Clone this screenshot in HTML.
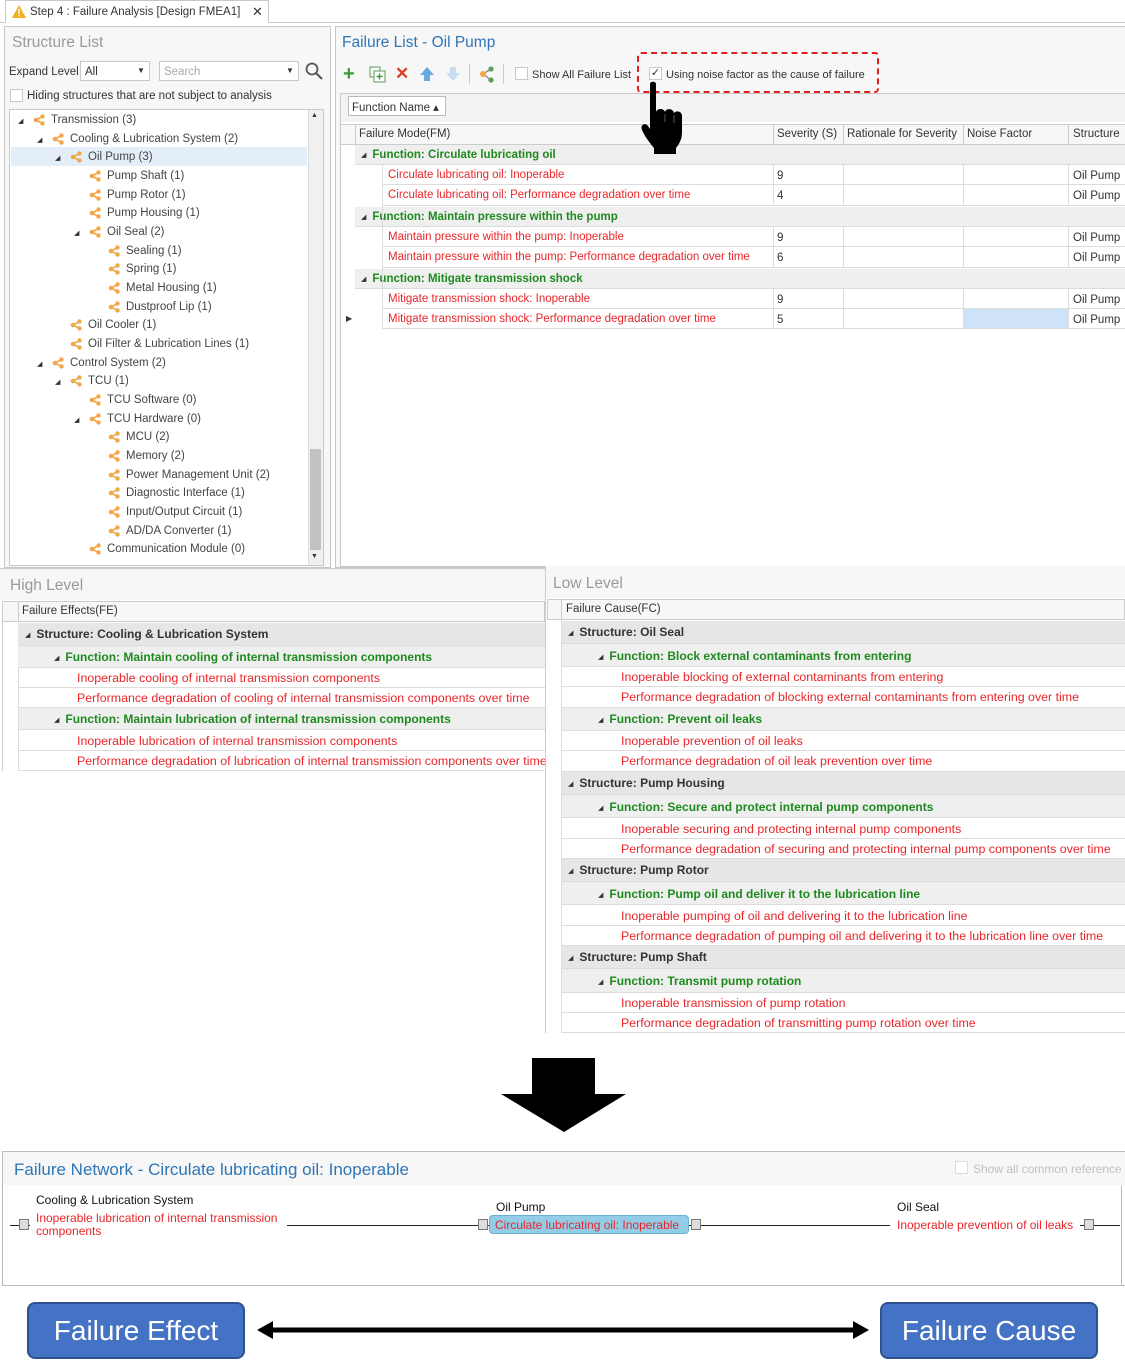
<!DOCTYPE html>
<html><head><meta charset="utf-8"><style>
*{margin:0;padding:0;box-sizing:border-box}
body{width:1125px;height:1371px;background:#fff;position:relative;overflow:hidden;font-family:"Liberation Sans",sans-serif;font-size:11.5px;color:#333}
.a{position:absolute;white-space:nowrap}
.b{position:absolute;border:1px solid #c8c8c8}
.ti{position:absolute;font-size:15.5px;color:#9a9a9a}
.tr{position:absolute;height:19px;line-height:21px;font-size:11.5px;color:#444;white-space:nowrap}
.tr svg{position:absolute;left:-18px;top:4px}
.tr i{position:absolute;left:-33px;top:1px;font-style:normal;font-size:7px;color:#333}
.row{position:absolute;white-space:nowrap;border-bottom:1px solid #dcdcdc}
.g{background:#efefef;color:#1e8a1e;font-weight:bold}
.s{background:#e6e6e6;color:#333;font-weight:bold}
.r{color:#e8262a;background:#fff}
.L{font-size:12.4px}
.L.g,.L.s{font-size:12px}
.tri{font-size:7px;color:#333;font-weight:normal;display:inline-block;margin-right:6px;vertical-align:1px}
</style></head><body>
<svg width="0" height="0" style="position:absolute"><defs><g id="sh"><line x1="3" y1="6" x2="9.5" y2="2.5" stroke="#f0a848" stroke-width="1.6"/><line x1="3" y1="6" x2="9.5" y2="9.5" stroke="#f0a848" stroke-width="1.6"/><circle cx="3" cy="6" r="2.3" fill="#f0a848"/><circle cx="9.5" cy="2.5" r="2.2" fill="#f0a848"/><circle cx="9.5" cy="9.5" r="2.2" fill="#f0a848"/></g></defs></svg>

<!-- tab -->
<div class="a" style="left:0;top:22px;width:1125px;border-top:1px solid #c8c8c8"></div>
<div class="a" style="left:5px;top:0;width:264px;height:23px;background:#fff;border:1px solid #c8c8c8;border-bottom:none"></div>
<svg class="a" style="left:12px;top:5px" width="14" height="13"><polygon points="7,0 14,13 0,13" fill="#f0b020"/><rect x="6.3" y="4" width="1.4" height="5" fill="#fff"/><rect x="6.3" y="10" width="1.4" height="1.5" fill="#fff"/></svg>
<div class="a" style="left:30px;top:6px;font-size:11.5px;color:#333">Step 4 : Failure Analysis [Design FMEA1]</div>
<div class="a" style="left:252px;top:4px;font-size:13px;color:#333">✕</div>

<!-- left panel -->
<div class="b" style="left:4px;top:26px;width:327px;height:542px;background:#f7f7f7"></div>
<div class="ti" style="left:12px;top:34px">Structure List</div>
<div class="a" style="left:9px;top:66px;font-size:11.5px">Expand Level</div>
<div class="b" style="left:80px;top:61px;width:70px;height:20px;background:#fff"></div>
<div class="a" style="left:85px;top:66px;font-size:11.5px">All</div>
<div class="a" style="left:137px;top:66px;font-size:8px">▼</div>
<div class="b" style="left:159px;top:61px;width:140px;height:20px;background:#fff"></div>
<div class="a" style="left:164px;top:66px;font-size:11.5px;color:#aaa">Search</div>
<div class="a" style="left:286px;top:66px;font-size:8px">▼</div>
<svg class="a" style="left:305px;top:62px" width="18" height="18"><circle cx="7" cy="7" r="5.5" fill="none" stroke="#555" stroke-width="1.8"/><line x1="11" y1="11" x2="17" y2="17" stroke="#555" stroke-width="2"/></svg>
<div class="b" style="left:10px;top:89px;width:13px;height:13px;background:#fff"></div>
<div class="a" style="left:27px;top:90px;font-size:11.5px">Hiding structures that are not subject to analysis</div>
<div class="b" style="left:9px;top:109px;width:315px;height:457px;background:#fff"></div>
<div class="a" style="left:11px;top:147px;width:296px;height:19px;background:#e3eef8"></div>
<div class="a" style="left:308px;top:110px;width:15px;height:455px;background:#f0f0f0;border-left:1px solid #ddd"></div>
<div class="a" style="left:310px;top:449px;width:11px;height:101px;background:#c2c2c2"></div>
<div class="a" style="left:311px;top:112px;font-size:7px">▲</div>
<div class="a" style="left:311px;top:553px;font-size:7px">▼</div>

<div class="tr" style="left:51px;top:110px"><i>◢</i><svg width="12" height="12"><use href="#sh"/></svg>Transmission (3)</div>
<div class="tr" style="left:70px;top:129px"><i>◢</i><svg width="12" height="12"><use href="#sh"/></svg>Cooling &amp; Lubrication System (2)</div>
<div class="tr" style="left:88px;top:147px"><i>◢</i><svg width="12" height="12"><use href="#sh"/></svg>Oil Pump (3)</div>
<div class="tr" style="left:107px;top:166px"><svg width="12" height="12"><use href="#sh"/></svg>Pump Shaft (1)</div>
<div class="tr" style="left:107px;top:185px"><svg width="12" height="12"><use href="#sh"/></svg>Pump Rotor (1)</div>
<div class="tr" style="left:107px;top:203px"><svg width="12" height="12"><use href="#sh"/></svg>Pump Housing (1)</div>
<div class="tr" style="left:107px;top:222px"><i>◢</i><svg width="12" height="12"><use href="#sh"/></svg>Oil Seal (2)</div>
<div class="tr" style="left:126px;top:241px"><svg width="12" height="12"><use href="#sh"/></svg>Sealing (1)</div>
<div class="tr" style="left:126px;top:259px"><svg width="12" height="12"><use href="#sh"/></svg>Spring (1)</div>
<div class="tr" style="left:126px;top:278px"><svg width="12" height="12"><use href="#sh"/></svg>Metal Housing (1)</div>
<div class="tr" style="left:126px;top:297px"><svg width="12" height="12"><use href="#sh"/></svg>Dustproof Lip (1)</div>
<div class="tr" style="left:88px;top:315px"><svg width="12" height="12"><use href="#sh"/></svg>Oil Cooler (1)</div>
<div class="tr" style="left:88px;top:334px"><svg width="12" height="12"><use href="#sh"/></svg>Oil Filter &amp; Lubrication Lines (1)</div>
<div class="tr" style="left:70px;top:353px"><i>◢</i><svg width="12" height="12"><use href="#sh"/></svg>Control System (2)</div>
<div class="tr" style="left:88px;top:371px"><i>◢</i><svg width="12" height="12"><use href="#sh"/></svg>TCU (1)</div>
<div class="tr" style="left:107px;top:390px"><svg width="12" height="12"><use href="#sh"/></svg>TCU Software (0)</div>
<div class="tr" style="left:107px;top:409px"><i>◢</i><svg width="12" height="12"><use href="#sh"/></svg>TCU Hardware (0)</div>
<div class="tr" style="left:126px;top:427px"><svg width="12" height="12"><use href="#sh"/></svg>MCU (2)</div>
<div class="tr" style="left:126px;top:446px"><svg width="12" height="12"><use href="#sh"/></svg>Memory (2)</div>
<div class="tr" style="left:126px;top:465px"><svg width="12" height="12"><use href="#sh"/></svg>Power Management Unit (2)</div>
<div class="tr" style="left:126px;top:483px"><svg width="12" height="12"><use href="#sh"/></svg>Diagnostic Interface (1)</div>
<div class="tr" style="left:126px;top:502px"><svg width="12" height="12"><use href="#sh"/></svg>Input/Output Circuit (1)</div>
<div class="tr" style="left:126px;top:521px"><svg width="12" height="12"><use href="#sh"/></svg>AD/DA Converter (1)</div>
<div class="tr" style="left:107px;top:539px"><svg width="12" height="12"><use href="#sh"/></svg>Communication Module (0)</div>

<!-- right panel -->
<div class="b" style="left:335px;top:26px;width:800px;height:542px;background:#f7f7f7"></div>
<div class="a" style="left:342px;top:34px;font-size:15.5px;color:#2e75b6">Failure List - Oil Pump</div>
<div class="a" style="left:343px;top:63px;font-size:20px;color:#3a9a3a;font-weight:bold">+</div>
<svg class="a" style="left:369px;top:66px" width="17" height="17"><rect x="1" y="1" width="10" height="10" fill="none" stroke="#5a9a5a"/><rect x="5" y="5" width="11" height="11" fill="#fff" stroke="#5a9a5a"/><path d="M10.5 7.5v6M7.5 10.5h6" stroke="#3a9a3a" stroke-width="1.4"/></svg>
<div class="a" style="left:395px;top:64px;font-size:17px;color:#d84020;font-weight:bold">✕</div>
<svg class="a" style="left:419px;top:66px" width="16" height="16"><path d="M8 1L15 9H11V15H5V9H1Z" fill="#6aa8e0"/></svg>
<svg class="a" style="left:445px;top:66px" width="16" height="16"><path d="M8 15L15 7H11V1H5V7H1Z" fill="#c8dcf2"/></svg>
<div class="a" style="left:469px;top:64px;width:1px;height:20px;background:#ccc"></div>
<svg class="a" style="left:479px;top:66px" width="16" height="17"><line x1="4" y1="8" x2="12" y2="3" stroke="#888" stroke-width="1.4"/><line x1="4" y1="8" x2="12" y2="14" stroke="#888" stroke-width="1.4"/><circle cx="4" cy="8" r="3" fill="#f0a848"/><circle cx="12" cy="3" r="2.6" fill="#5aa05a"/><circle cx="12" cy="14" r="2.6" fill="#5aa05a"/></svg>
<div class="a" style="left:503px;top:64px;width:1px;height:20px;background:#ccc"></div>
<div class="b" style="left:515px;top:67px;width:13px;height:13px;background:#fff"></div>
<div class="a" style="left:532px;top:69px;font-size:11px">Show All Failure List</div>
<div class="b" style="left:649px;top:67px;width:13px;height:13px;background:#fff;font-size:11px;line-height:11px;text-align:center;color:#333">✓</div>
<div class="a" style="left:666px;top:69px;font-size:11px">Using noise factor as the cause of failure</div>
<div class="a" style="left:637px;top:52px;width:242px;height:41px;border:2px dashed #e02020;border-radius:4px"></div>

<div class="b" style="left:340px;top:93px;width:790px;height:474px;background:#fff"></div>
<div class="a" style="left:341px;top:94px;width:789px;height:28px;background:#f3f3f3"></div>
<div class="b" style="left:348px;top:96px;width:98px;height:20px;background:#fff;border-color:#bbb"></div>
<div class="a" style="left:352px;top:100px">Function Name ▴</div>
<div class="a" style="left:341px;top:124px;width:789px;height:21px;background:#f7f7f7;border-top:1px solid #ccc;border-bottom:1px solid #ccc"></div>
<div class="a" style="left:355px;top:124px;width:1px;height:21px;background:#ccc"></div>
<div class="a" style="left:773px;top:124px;width:1px;height:21px;background:#ccc"></div>
<div class="a" style="left:843px;top:124px;width:1px;height:21px;background:#ccc"></div>
<div class="a" style="left:963px;top:124px;width:1px;height:21px;background:#ccc"></div>
<div class="a" style="left:1068px;top:124px;width:1px;height:21px;background:#ccc"></div>
<div class="a" style="left:359px;top:128px">Failure Mode(FM)</div>
<div class="a" style="left:777px;top:128px">Severity (S)</div>
<div class="a" style="left:847px;top:128px">Rationale for Severity</div>
<div class="a" style="left:967px;top:128px">Noise Factor</div>
<div class="a" style="left:1073px;top:128px">Structure</div>

<div class="row g" style="left:355px;top:145px;width:775px;height:20px;line-height:21px;padding-left:6px"><span class="tri">◢</span>Function: Circulate lubricating oil</div>
<div class="row g" style="left:355px;top:207px;width:775px;height:20px;line-height:21px;padding-left:6px"><span class="tri">◢</span>Function: Maintain pressure within the pump</div>
<div class="row g" style="left:355px;top:269px;width:775px;height:20px;line-height:21px;padding-left:6px"><span class="tri">◢</span>Function: Mitigate transmission shock</div>

<div class="row r" style="left:382px;top:165px;width:748px;height:20px;line-height:21px;padding-left:6px">Circulate lubricating oil: Inoperable</div>
<div class="row r" style="left:382px;top:185px;width:748px;height:21px;line-height:21px;padding-left:6px">Circulate lubricating oil: Performance degradation over time</div>
<div class="row r" style="left:382px;top:227px;width:748px;height:20px;line-height:21px;padding-left:6px">Maintain pressure within the pump: Inoperable</div>
<div class="row r" style="left:382px;top:247px;width:748px;height:21px;line-height:21px;padding-left:6px">Maintain pressure within the pump: Performance degradation over time</div>
<div class="row r" style="left:382px;top:289px;width:748px;height:20px;line-height:21px;padding-left:6px">Mitigate transmission shock: Inoperable</div>
<div class="row r" style="left:382px;top:309px;width:748px;height:20px;line-height:21px;padding-left:6px">Mitigate transmission shock: Performance degradation over time</div>
<div class="a" style="left:964px;top:309px;width:104px;height:19px;background:#cfe4f8"></div>
<div class="a" style="left:346px;top:314px;font-size:8px">▶</div>
<div class="a" style="left:382px;top:165px;width:1px;height:164px;background:#ddd"></div>
<div class="a" style="left:773px;top:165px;width:1px;height:41px;background:#ddd"></div>
<div class="a" style="left:843px;top:165px;width:1px;height:41px;background:#ddd"></div>
<div class="a" style="left:963px;top:165px;width:1px;height:41px;background:#ddd"></div>
<div class="a" style="left:1068px;top:165px;width:1px;height:41px;background:#ddd"></div>
<div class="a" style="left:773px;top:227px;width:1px;height:41px;background:#ddd"></div>
<div class="a" style="left:843px;top:227px;width:1px;height:41px;background:#ddd"></div>
<div class="a" style="left:963px;top:227px;width:1px;height:41px;background:#ddd"></div>
<div class="a" style="left:1068px;top:227px;width:1px;height:41px;background:#ddd"></div>
<div class="a" style="left:773px;top:289px;width:1px;height:40px;background:#ddd"></div>
<div class="a" style="left:843px;top:289px;width:1px;height:40px;background:#ddd"></div>
<div class="a" style="left:963px;top:289px;width:1px;height:40px;background:#ddd"></div>
<div class="a" style="left:1068px;top:289px;width:1px;height:40px;background:#ddd"></div>
<div class="a" style="left:777px;top:170px">9</div><div class="a" style="left:1073px;top:170px">Oil Pump</div>
<div class="a" style="left:777px;top:190px">4</div><div class="a" style="left:1073px;top:190px">Oil Pump</div>
<div class="a" style="left:777px;top:232px">9</div><div class="a" style="left:1073px;top:232px">Oil Pump</div>
<div class="a" style="left:777px;top:252px">6</div><div class="a" style="left:1073px;top:252px">Oil Pump</div>
<div class="a" style="left:777px;top:294px">9</div><div class="a" style="left:1073px;top:294px">Oil Pump</div>
<div class="a" style="left:777px;top:314px">5</div><div class="a" style="left:1073px;top:314px">Oil Pump</div>

<!-- hand cursor -->
<svg class="a" style="left:638px;top:80px" width="52" height="74" viewBox="0 0 52 74"><path d="M12 4c0-3 6-3 6 0v28c1-4 8-4 9 0c1-4 8-4 9 1c2-3 8-2 8 3v16c0 8-3 12-6 16v6H16v-6c-4-5-9-11-12-18c-2-5 3-8 6-4l2 3z" fill="#000"/><path d="M27 34v8M36 35v8" stroke="#555" stroke-width="1"/></svg>

<!-- High Level -->
<div class="a" style="left:0;top:568px;width:545px;height:32px;background:#f7f7f7;border-top:1px solid #ccc"></div>
<div class="ti" style="left:10px;top:577px">High Level</div>
<div class="a" style="left:2px;top:601px;width:543px;height:21px;background:#f7f7f7;border:1px solid #ccc"></div>
<div class="a" style="left:18px;top:601px;width:1px;height:21px;background:#ccc"></div>
<div class="a" style="left:22px;top:605px">Failure Effects(FE)</div>
<div class="a" style="left:2px;top:622px;width:1px;height:149px;background:#ccc"></div>
<div class="row s L" style="left:18px;top:623px;width:527px;height:23px;line-height:23px;padding-left:7px"><span class="tri">◢</span>Structure: Cooling &amp; Lubrication System</div>
<div class="row g L" style="left:18px;top:646px;width:527px;height:22px;line-height:22px;padding-left:36px"><span class="tri">◢</span>Function: Maintain cooling of internal transmission components</div>
<div class="row r L" style="left:18px;top:668px;width:527px;height:20px;line-height:21px;padding-left:59px">Inoperable cooling of internal transmission components</div>
<div class="row r L" style="left:18px;top:688px;width:527px;height:20px;line-height:21px;padding-left:59px">Performance degradation of cooling of internal transmission components over time</div>
<div class="row g L" style="left:18px;top:708px;width:527px;height:22px;line-height:23px;padding-left:36px"><span class="tri">◢</span>Function: Maintain lubrication of internal transmission components</div>
<div class="row r L" style="left:18px;top:730px;width:527px;height:21px;line-height:22px;padding-left:59px">Inoperable lubrication of internal transmission components</div>
<div class="row r L" style="left:18px;top:751px;width:527px;height:20px;line-height:21px;padding-left:59px">Performance degradation of lubrication of internal transmission components over time</div>
<div class="a" style="left:18px;top:668px;width:1px;height:103px;background:#ddd"></div>

<!-- Low Level -->
<div class="a" style="left:545px;top:566px;width:580px;height:32px;background:#f7f7f7"></div>
<div class="a" style="left:545px;top:566px;width:1px;height:467px;background:#ccc"></div>
<div class="ti" style="left:553px;top:575px">Low Level</div>
<div class="a" style="left:547px;top:599px;width:578px;height:21px;background:#f7f7f7;border:1px solid #ccc"></div>
<div class="a" style="left:561px;top:599px;width:1px;height:21px;background:#ccc"></div>
<div class="a" style="left:566px;top:603px">Failure Cause(FC)</div>
<div class="row s L" style="left:561px;top:621px;width:564px;height:23px;line-height:23px;padding-left:7px"><span class="tri">◢</span>Structure: Oil Seal</div>
<div class="row g L" style="left:561px;top:644px;width:564px;height:23px;line-height:24px;padding-left:37px"><span class="tri">◢</span>Function: Block external contaminants from entering</div>
<div class="row r L" style="left:561px;top:667px;width:564px;height:20px;line-height:21px;padding-left:60px">Inoperable blocking of external contaminants from entering</div>
<div class="row r L" style="left:561px;top:687px;width:564px;height:21px;line-height:21px;padding-left:60px">Performance degradation of blocking external contaminants from entering over time</div>
<div class="row g L" style="left:561px;top:708px;width:564px;height:23px;line-height:23px;padding-left:37px"><span class="tri">◢</span>Function: Prevent oil leaks</div>
<div class="row r L" style="left:561px;top:731px;width:564px;height:20px;line-height:21px;padding-left:60px">Inoperable prevention of oil leaks</div>
<div class="row r L" style="left:561px;top:751px;width:564px;height:21px;line-height:21px;padding-left:60px">Performance degradation of oil leak prevention over time</div>
<div class="row s L" style="left:561px;top:772px;width:564px;height:23px;line-height:23px;padding-left:7px"><span class="tri">◢</span>Structure: Pump Housing</div>
<div class="row g L" style="left:561px;top:795px;width:564px;height:23px;line-height:24px;padding-left:37px"><span class="tri">◢</span>Function: Secure and protect internal pump components</div>
<div class="row r L" style="left:561px;top:818px;width:564px;height:21px;line-height:22px;padding-left:60px">Inoperable securing and protecting internal pump components</div>
<div class="row r L" style="left:561px;top:839px;width:564px;height:20px;line-height:21px;padding-left:60px">Performance degradation of securing and protecting internal pump components over time</div>
<div class="row s L" style="left:561px;top:859px;width:564px;height:23px;line-height:23px;padding-left:7px"><span class="tri">◢</span>Structure: Pump Rotor</div>
<div class="row g L" style="left:561px;top:882px;width:564px;height:23px;line-height:24px;padding-left:37px"><span class="tri">◢</span>Function: Pump oil and deliver it to the lubrication line</div>
<div class="row r L" style="left:561px;top:905px;width:564px;height:21px;line-height:22px;padding-left:60px">Inoperable pumping of oil and delivering it to the lubrication line</div>
<div class="row r L" style="left:561px;top:926px;width:564px;height:20px;line-height:21px;padding-left:60px">Performance degradation of pumping oil and delivering it to the lubrication line over time</div>
<div class="row s L" style="left:561px;top:946px;width:564px;height:23px;line-height:23px;padding-left:7px"><span class="tri">◢</span>Structure: Pump Shaft</div>
<div class="row g L" style="left:561px;top:969px;width:564px;height:24px;line-height:25px;padding-left:37px"><span class="tri">◢</span>Function: Transmit pump rotation</div>
<div class="row r L" style="left:561px;top:993px;width:564px;height:20px;line-height:21px;padding-left:60px">Inoperable transmission of pump rotation</div>
<div class="row r L" style="left:561px;top:1013px;width:564px;height:20px;line-height:21px;padding-left:60px">Performance degradation of transmitting pump rotation over time</div>
<div class="a" style="left:561px;top:620px;width:1px;height:413px;background:#ddd"></div>

<!-- big down arrow -->
<svg class="a" style="left:498px;top:1056px" width="132" height="78"><polygon points="34,2 97,2 97,38 128,38 66,76 3,38 34,38" fill="#000"/></svg>

<!-- failure network -->
<div class="a" style="left:2px;top:1151px;width:1125px;height:135px;border:1px solid #bbb;background:#fff"></div>
<div class="a" style="left:3px;top:1152px;width:1122px;height:33px;background:#f7f7f7"></div>
<div class="a" style="left:14px;top:1160px;font-size:17px;color:#2e75b6">Failure Network - Circulate lubricating oil: Inoperable</div>
<div class="b" style="left:955px;top:1161px;width:13px;height:13px;background:#fff;border-color:#ddd"></div>
<div class="a" style="left:973px;top:1162px;font-size:12px;color:#c0c0c0">Show all common reference</div>
<div class="a" style="left:1121px;top:1186px;width:4px;height:100px;border-left:1px solid #bbb"></div>
<div class="a" style="left:10px;top:1225px;width:1110px;height:1px;background:#222"></div>
<div class="a" style="left:30px;top:1210px;width:257px;height:30px;background:#fff"></div>
<div class="a" style="left:890px;top:1215px;width:190px;height:20px;background:#fff"></div>
<div class="a" style="left:36px;top:1193px;font-size:12px;color:#111">Cooling &amp; Lubrication System</div>
<div class="a" style="left:36px;top:1212px;font-size:12px;color:#e8262a;line-height:13px">Inoperable lubrication of internal transmission<br>components</div>
<div class="a" style="left:496px;top:1200px;font-size:12px;color:#111">Oil Pump</div>
<div class="a" style="left:489px;top:1215px;width:200px;height:19px;background:#92cce6;border:1px solid #6aaed0;border-radius:4px"></div>
<div class="a" style="left:495px;top:1218px;font-size:12px;color:#e8262a">Circulate lubricating oil: Inoperable</div>
<div class="a" style="left:897px;top:1200px;font-size:12px;color:#111">Oil Seal</div>
<div class="a" style="left:897px;top:1218px;font-size:12px;color:#e8262a">Inoperable prevention of oil leaks</div>
<div class="b" style="left:19px;top:1219px;width:10px;height:11px;background:#ddd;border-color:#777"></div>
<div class="b" style="left:478px;top:1219px;width:10px;height:11px;background:#ddd;border-color:#777"></div>
<div class="b" style="left:691px;top:1219px;width:10px;height:11px;background:#ddd;border-color:#777"></div>
<div class="b" style="left:1084px;top:1219px;width:10px;height:11px;background:#ddd;border-color:#777"></div>

<!-- bottom labels -->
<div class="a" style="left:27px;top:1302px;width:218px;height:57px;background:#4472c4;border:2px solid #2f528f;border-radius:8px;color:#fff;font-size:28px;text-align:center;line-height:53px">Failure Effect</div>
<div class="a" style="left:880px;top:1302px;width:218px;height:57px;background:#4472c4;border:2px solid #2f528f;border-radius:8px;color:#fff;font-size:28px;text-align:center;line-height:53px">Failure Cause</div>
<svg class="a" style="left:255px;top:1318px" width="616" height="24"><line x1="15" y1="12" x2="601" y2="12" stroke="#000" stroke-width="5"/><polygon points="2,12 18,3 18,21" fill="#000"/><polygon points="614,12 598,3 598,21" fill="#000"/></svg>
</body></html>
